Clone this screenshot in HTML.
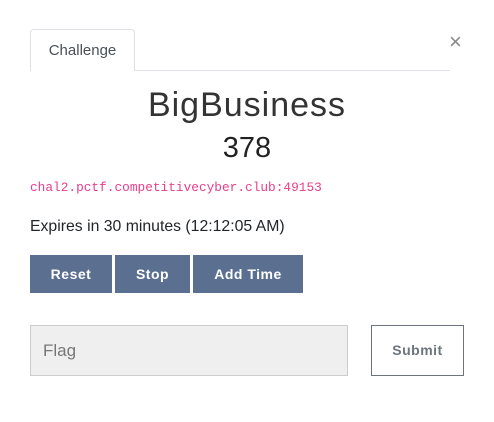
<!DOCTYPE html>
<html><head><style>
body{margin:0;width:494px;height:422px;background:#fff;font-family:"Liberation Sans",sans-serif;position:relative;overflow:hidden}
.a{position:absolute}
.tab{left:30px;top:29px;width:103px;height:41px;border:1px solid #dee2e6;border-bottom:none;border-radius:4px 4px 0 0;background:#fff;font-size:15px;color:#495057;text-align:center;line-height:42px}
.line{left:30px;top:70px;width:420px;height:1px;background:#dee2e6}
.btn{top:255px;height:38px;background:#5b7090;color:#fff;font-weight:bold;font-size:14px;text-align:center;line-height:38px;letter-spacing:.5px}
</style></head><body>
<div class="a line"></div>
<div class="a tab">Challenge</div>
<div class="a" style="left:449px;top:29px;font-size:22px;color:#888">×</div>
<div class="a" style="left:0;width:494px;top:86px;text-align:center;font-size:34px;color:#333;letter-spacing:1px">BigBusiness</div>
<div class="a" style="left:0;width:494px;top:132px;text-align:center;font-size:29px;color:#222">378</div>
<div class="a" style="left:30px;top:180px;font-family:'Liberation Mono',monospace;font-size:12.8px;color:#e83e8c">chal2.pctf.competitivecyber.club:49153</div>
<div class="a" style="left:30px;top:218px;font-size:15.8px;color:#212529">Expires in 30 minutes (12:12:05 AM)</div>
<div class="a btn" style="left:30px;width:82px">Reset</div>
<div class="a btn" style="left:115px;width:75px">Stop</div>
<div class="a btn" style="left:193px;width:110px">Add Time</div>
<div class="a" style="left:30px;top:325px;width:316px;height:49px;background:#efefef;border:1px solid #ccc;font-size:17px;color:#777;line-height:49px;text-indent:12px">Flag</div>
<div class="a" style="left:371px;top:325px;width:91px;height:49px;border:1px solid #6c757d;font-size:14px;font-weight:bold;color:#6c757d;text-align:center;line-height:49px;letter-spacing:.5px">Submit</div>
</body></html>
